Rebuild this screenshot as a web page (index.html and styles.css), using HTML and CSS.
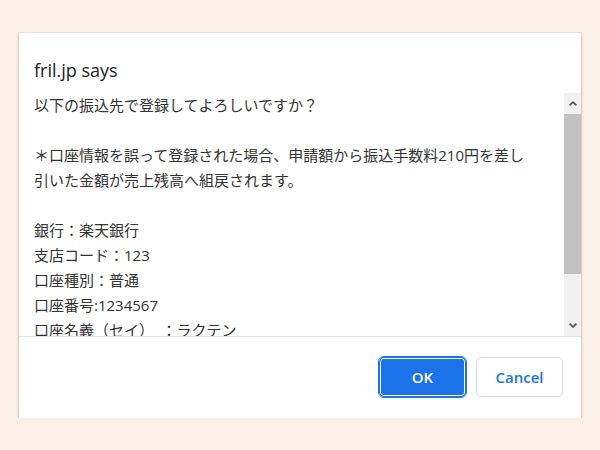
FILE: index.html
```html
<!DOCTYPE html>
<html lang="ja">
<head>
<meta charset="utf-8">
<title>fril.jp says</title>
<link rel="stylesheet" href="styles.css">
</head>
<body>
<div class="page">
  <div class="dialog">
    <h1 class="title">fril.jp says</h1>
    <div class="body">
      <div class="message">
        <p>以下の振込先で登録してよろしいですか？</p>
        <p class="blank">&nbsp;</p>
        <p>＊口座情報を誤って登録された場合、申請額から振込手数料210円を差し<br>引いた金額が売上残高へ組戻されます。</p>
        <p class="blank">&nbsp;</p>
        <p>銀行：楽天銀行</p>
        <p>支店コード：123</p>
        <p>口座種別：普通</p>
        <p>口座番号:1234567</p>
        <p>口座名義（セイ）&ensp;：ラクテン</p>
        <p>口座名義（メイ）&ensp;：タロウ</p>
      </div>
      <div class="scrollbar">
        <div class="sb-btn">
          <svg width="8" height="5" viewBox="0 0 8 5"><path d="M4 0L8 3.8 6.8 5 4 2.3 1.2 5 0 3.8Z" fill="#505050"/></svg>
        </div>
        <div class="thumb"></div>
        <div class="sb-space"></div>
        <div class="sb-btn">
          <svg width="8" height="5" viewBox="0 0 8 5"><path d="M4 5L8 1.2 6.8 0 4 2.7 1.2 0 0 1.2Z" fill="#505050"/></svg>
        </div>
      </div>
    </div>
    <div class="footer">
      <button class="btn ok">OK</button>
      <button class="btn cancel">Cancel</button>
    </div>
  </div>
</div>
</body>
</html>
```
FILE: styles.css
```css
* { box-sizing: border-box; }

body {
  margin: 0;
  background: #fdf0e8;
  font-family: "Open Sans", "Noto Sans CJK JP", sans-serif;
}

.page {
  padding: 33px 19px 0 19px;
}

.dialog {
  width: 562px;
  height: 385px;
  background: #fff;
  display: flex;
  flex-direction: column;
  box-shadow: 0 0 0 1px rgba(0, 0, 0, 0.06), 0 2px 3px rgba(0, 0, 0, 0.24);
}

.title {
  margin: 0;
  height: 60px;
  padding: 25px 15px 0;
  font-size: 18px;
  line-height: 24px;
  font-weight: 400;
  color: #202124;
}

.body {
  display: flex;
  height: 243px;
}

.message {
  flex: 1;
  overflow: hidden;
  padding-left: 15px;
  font-size: 15px;
  line-height: 25px;
  color: #333;
}

.message p {
  margin: 0;
}

.scrollbar {
  width: 17px;
  display: flex;
  flex-direction: column;
  background: #f1f1f1;
}

.sb-btn {
  height: 21px;
  display: flex;
  align-items: center;
  justify-content: center;
}

.sb-btn svg { display: block; }

.thumb {
  height: 160px;
  background: #c1c1c1;
}

.sb-space { flex: 1; }

.footer {
  flex: 1;
  border-top: 1px solid #e3e3e3;
  display: flex;
  justify-content: flex-end;
  align-items: flex-start;
  gap: 10px;
  padding: 20px 18px 0 0;
}

.btn {
  width: 87px;
  height: 40px;
  border-radius: 5px;
  font-family: "Open Sans", sans-serif;
  font-size: 15px;
  font-weight: 600;
  padding: 0;
  cursor: pointer;
}

.ok {
  background: #1a73e8;
  color: #fff;
  border: 1px solid #1a73e8;
  outline: 1px solid #1a73e8;
  box-shadow: inset 0 0 0 1px #fff;
}

.cancel {
  background: #fff;
  color: #1a73e8;
  border: 1px solid #dadce0;
}
```
